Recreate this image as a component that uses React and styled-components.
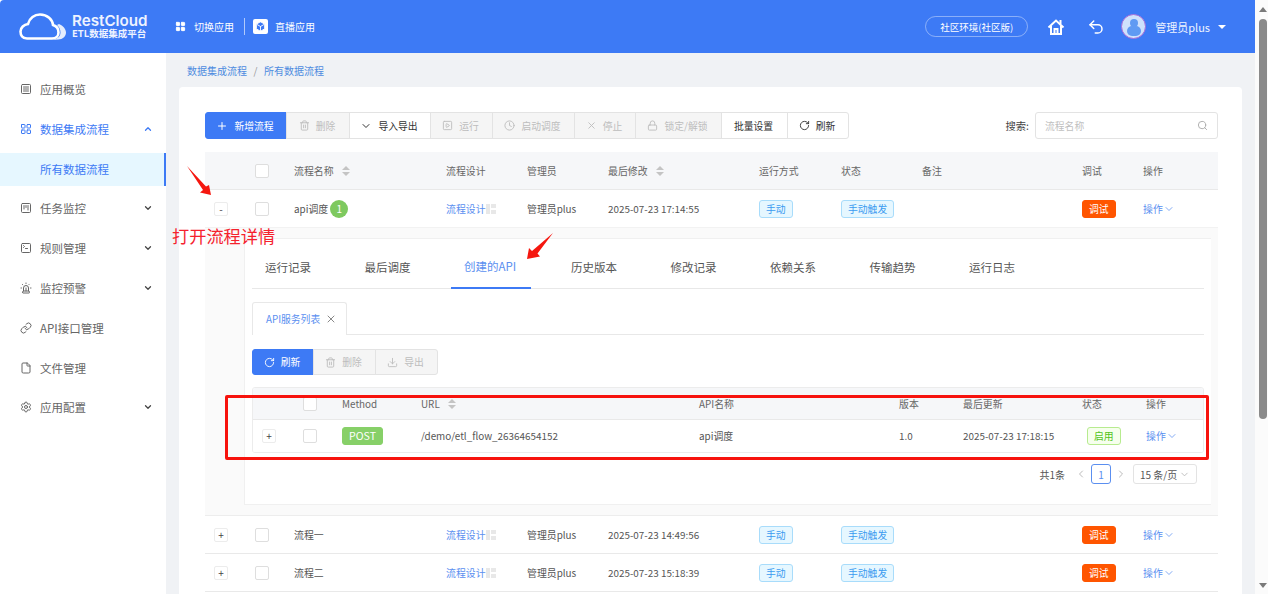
import React from "react";
import styled, { createGlobalStyle } from "styled-components";
import {
  Box, ChevronDown, ChevronLeft, ChevronRight, ChevronUp, Clock, Download, File,
  LayoutGrid, Link, Lock, Plus, RotateCw, Search, Settings, Siren, SquareKanban, SquareMenu, SquarePlay,
  SquareTerminal, Trash2, Undo2, X,
} from "lucide-react";

const blue = "#3d7af5";
const font = `"Noto Sans CJK SC", "Noto Sans", sans-serif`;

const GlobalStyle = createGlobalStyle`
  html, body { margin: 0; padding: 0; height: 100%; overflow: hidden; }
  body { font-family: ${font}; font-size: 10px; color: #595959; background: #fff; }
  * { box-sizing: border-box; }
`;

const Page = styled.div`
  position: relative;
  display: flex;
  width: 1268px;
  height: 594px;
  overflow: hidden;
`;

const Shell = styled.div`
  width: 1255px;
  flex: none;
  display: flex;
  flex-direction: column;
`;

const Scrollbar = styled.div`
  width: 13px;
  flex: none;
  display: flex;
  flex-direction: column;
  align-items: center;
  padding: 7px 0 6px 3px;
  background: #fbfbfb;
`;

const ScrollArrow = styled.div`
  width: 0;
  height: 0;
  border-left: 4px solid transparent;
  border-right: 4px solid transparent;
  ${(p) => (p.$down ? "border-top: 5px solid #7a7a7a;" : "border-bottom: 5px solid #7a7a7a;")}
`;

const ScrollThumb = styled.div`
  width: 8px;
  height: 400px;
  margin-top: 7px;
  margin-bottom: auto;
  border-radius: 4px;
  background: #8a8a8a;
`;

const Header = styled.header`
  height: 53px;
  flex: none;
  display: flex;
  align-items: center;
  padding: 0 29px 0 19px;
  background: ${blue};
  color: #fff;
  border-top-left-radius: 4px;
`;

const Logo = styled.div`
  display: flex;
  align-items: center;
  gap: 6px;
  width: 156px;
`;

const LogoText = styled.div`
  display: flex;
  flex-direction: column;
  margin-top: -1px;
  color: #eef3ff;
`;

const LogoName = styled.span`
  font-family: "Inter", sans-serif;
  font-size: 15.2px;
  line-height: 15px;
  font-weight: 600;
`;

const LogoSub = styled.span`
  font-size: 9.5px;
  line-height: 11px;
  font-weight: 700;
`;

const HeaderLink = styled.div`
  display: flex;
  align-items: center;
  gap: ${(p) => p.$gap}px;
  font-size: 10px;
`;

const HeaderDivider = styled.div`
  width: 1px;
  height: 17px;
  margin: 0 8px 0 10px;
  background: rgba(255, 255, 255, 0.6);
`;

const LiveIcon = styled.div`
  width: 15px;
  height: 15px;
  display: flex;
  align-items: center;
  justify-content: center;
  border-radius: 2px;
  background: #fff;
  color: ${blue};
`;

const HeaderRight = styled.div`
  margin-left: auto;
  display: flex;
  align-items: center;
`;

const EnvPill = styled.div`
  width: 103px;
  height: 21px;
  margin-right: 19px;
  display: flex;
  align-items: center;
  justify-content: center;
  border: 1px solid rgba(255, 255, 255, 0.4);
  border-radius: 11px;
  font-size: 9.5px;
`;

const HeaderIcon = styled.div`
  display: flex;
  margin-right: ${(p) => p.$right}px;
`;

const Avatar = styled.div`
  position: relative;
  width: 25px;
  height: 25px;
  margin: 0 9px 0 -8px;
  overflow: hidden;
  border-radius: 50%;
  border: 1px solid #a66bd8;
  background: #cfe1fc;

  &::before {
    content: "";
    position: absolute;
    left: 8px;
    top: 4px;
    width: 8px;
    height: 8px;
    border-radius: 50%;
    background: #5f9af3;
  }

  &::after {
    content: "";
    position: absolute;
    left: 5px;
    top: 11px;
    width: 14px;
    height: 10px;
    border-radius: 7px;
    background: #5f9af3;
  }
`;

const UserName = styled.span`
  font-size: 11px;
  color: #eef3ff;
`;

const Caret = styled.span`
  width: 0;
  height: 0;
  margin-left: 8px;
  border-left: 4px solid transparent;
  border-right: 4px solid transparent;
  border-top: 4px solid #fff;
`;

const Body = styled.div`
  flex: 1;
  display: flex;
  min-height: 0;
  background: #f0f2f5;
`;

const Sidebar = styled.nav`
  width: 166px;
  flex: none;
  padding-top: 16px;
  background: #fff;
`;

const NavItem = styled.div`
  height: 39.8px;
  display: flex;
  align-items: center;
  gap: 8px;
  padding: 0 13px 0 20px;
  font-size: 11.5px;
  color: ${(p) => (p.$active ? blue : "#666")};
`;

const NavChevron = styled.span`
  display: flex;
  margin-left: auto;
  color: ${(p) => (p.$active ? blue : "#444")};
`;

const NavSub = styled.div`
  height: 33px;
  margin: 4px 0 3px;
  display: flex;
  align-items: center;
  padding-left: 40px;
  font-size: 11.5px;
  color: ${blue};
  background: #e6f7ff;
  border-right: 2px solid ${blue};
`;

const Main = styled.main`
  flex: 1;
  min-width: 0;
  padding: 0 13px 0 13px;
`;

const Breadcrumb = styled.div`
  height: 34px;
  display: flex;
  align-items: center;
  gap: 6.5px;
  padding-left: 8px;
  color: #4e8be0;
  font-size: 10px;
`;

const Slash = styled.span`
  color: #999;
`;

const Card = styled.section`
  height: 600px;
  padding: 25px 24px 0 26px;
  background: #fff;
  border-radius: 4px 4px 0 0;
`;

const ToolRow = styled.div`
  height: 27px;
  display: flex;
  justify-content: space-between;
  margin-bottom: 13px;
`;

const BtnGroup = styled.div`
  display: flex;
  height: ${(p) => p.$h || 27}px;
`;

const Btn = styled.div`
  width: ${(p) => p.$w}px;
  display: flex;
  align-items: center;
  justify-content: center;
  gap: 6px;
  padding-right: 2px;
  margin-left: -1px;
  font-size: 9.8px;
  border: 1px solid ${(p) => (p.$primary ? blue : "#e3e3e3")};
  background: ${(p) => (p.$primary ? blue : p.$off ? "#f5f5f5" : "#fff")};
  color: ${(p) => (p.$primary ? "#fff" : p.$off ? "#bdbdbd" : "#333")};

  &:first-child {
    margin-left: 0;
    border-radius: 3px 0 0 3px;
  }

  &:last-child {
    border-radius: 0 3px 3px 0;
  }
`;

const SearchWrap = styled.div`
  display: flex;
  align-items: center;
  gap: 6px;
  color: #444;
  font-size: 10.3px;
`;

const SearchBox = styled.div`
  width: 183px;
  height: 27px;
  display: flex;
  align-items: center;
  justify-content: space-between;
  padding: 0 9px;
  font-size: 9.8px;
  border: 1px solid #e3e3e3;
  border-radius: 3px;
  color: #bfbfbf;
`;

const Row = styled.div`
  display: grid;
  grid-template-columns: ${(p) => p.$cols};
  height: ${(p) => p.$h}px;
  align-items: center;
  font-size: 9.9px;
  color: ${(p) => (p.$head ? "#666" : "#555")};
  background: ${(p) => (p.$head ? "#f6f7f9" : "#fff")};
  border-bottom: 1px solid ${(p) => p.$line || "#e9e9e9"};
`;

const Cell = styled.div`
  display: flex;
  align-items: center;
  gap: ${(p) => (p.$tight ? 0 : 5)}px;
  white-space: nowrap;
`;

const Sorter = styled.span`
  display: inline-flex;
  flex-direction: column;
  gap: 2px;
  margin-left: 3px;

  &::before, &::after {
    content: "";
    width: 0;
    height: 0;
    border-left: 4px solid transparent;
    border-right: 4px solid transparent;
  }

  &::before { border-bottom: 4px solid #c4c4c4; }
  &::after { border-top: 4px solid #c4c4c4; }
`;

const Check = styled.div`
  width: 14px;
  height: 14px;
  border: 1px solid #dedede;
  border-radius: 2px;
  background: #fff;
`;

const Expander = styled.div`
  width: 14px;
  height: 14px;
  margin-left: 9px;
  display: flex;
  align-items: center;
  justify-content: center;
  border: 1px solid #ececec;
  border-radius: 2px;
  background: #fff;
  color: #444;
  font-size: 10px;
`;

const Count = styled.span`
  width: 18px;
  height: 18px;
  margin-left: -3px;
  display: flex;
  align-items: center;
  justify-content: center;
  border-radius: 50%;
  background: #7ec95f;
  color: #fff;
  font-size: 10px;
`;

const LinkText = styled.span`
  color: #5b8ff0;
`;

const Tag = styled.span`
  height: 18px;
  margin-left: ${(p) => p.$left || 0}px;
  padding: 0 ${(p) => p.$pad || 6}px;
  display: inline-flex;
  align-items: center;
  border-radius: 3px;
  font-size: ${(p) => p.$size || 9.8}px;
  border: 1px solid ${(p) => p.$line};
  background: ${(p) => p.$bg};
  color: ${(p) => p.$fg};
`;

const Detail = styled.div`
  height: 288px;
  padding: 10px 7px 10px 39px;
  background: #fafafa;
  border-bottom: 1px solid #ededed;
`;

const DetailPanel = styled.div`
  height: 267px;
  padding: 0 7px 0 7px;
  background: #fff;
  border: 1px solid #f0f0f0;
  border-width: 1px 0 1px 1px;
`;

const TabBar = styled.div`
  height: 50px;
  display: flex;
  gap: 27px;
  border-bottom: 1px solid #e8e8e8;
`;

const TabItem = styled.div`
  width: ${(p) => (p.$active ? 80 : 72.5)}px;
  flex: none;
  display: flex;
  align-items: center;
  padding: 5px 0 0 13px;
  font-size: 11.5px;
  color: ${(p) => (p.$active ? "#5b8ff0" : "#555")};
  border-bottom: ${(p) => (p.$active ? `2px solid ${blue}` : "none")};
  margin-bottom: -1px;
`;

const SubTabs = styled.div`
  height: 33px;
  margin: 13px 0 14px;
  display: flex;
  border-bottom: 1px solid #e8e8e8;
`;

const SubTab = styled.div`
  width: 95px;
  height: 33px;
  display: flex;
  align-items: center;
  gap: 5px;
  padding-left: 13px;
  color: #5b8ff0;
  font-size: 9.8px;
  background: #fff;
  border: 1px solid #e8e8e8;
  border-bottom: none;
  border-radius: 3px 3px 0 0;

  svg { color: #888; }
`;

const InnerTable = styled.div`
  margin-top: 12px;
  border: 1px solid #ececec;
  border-radius: 3px;
  overflow: hidden;
`;

const Pager = styled.div`
  display: flex;
  align-items: center;
  justify-content: flex-end;
  gap: 4px;
  margin-top: 11px;
  padding-right: 7px;
  font-size: 10px;
  color: #555;
`;

const PagerTotal = styled.span`
  margin-right: 6px;
`;

const PageNum = styled.div`
  width: 20px;
  height: 20px;
  display: flex;
  align-items: center;
  justify-content: center;
  border: 1px solid #5b8ff0;
  border-radius: 3px;
  color: #5b8ff0;
`;

const PageSize = styled.div`
  width: 64px;
  height: 20px;
  margin-left: 2px;
  display: flex;
  align-items: center;
  justify-content: space-between;
  padding: 0 6px;
  border: 1px solid #e3e3e3;
  border-radius: 3px;
`;

const Annotation = styled.div`
  position: absolute;
  left: 172px;
  top: 224px;
  font-size: 17.2px;
  line-height: 24px;
  color: #f5222d;
  white-space: nowrap;
`;

const RedFrame = styled.div`
  position: absolute;
  left: 225px;
  top: 395px;
  width: 984px;
  height: 65px;
  border: 3px solid #f7130d;
  border-radius: 2px;
  pointer-events: none;
`;

const ArrowLayer = styled.svg`
  position: absolute;
  left: 0;
  top: 0;
  pointer-events: none;
`;

const mainCols = "50px 39px 152px 81px 81px 151px 82px 81px 160px 61px 1fr";
const innerCols = "50px 39px 79px 278px 200px 64px 119px 64px 1fr";

const navAfter = [
  { icon: SquareKanban, label: "任务监控", more: true },
  { icon: SquareTerminal, label: "规则管理", more: true },
  { icon: Siren, label: "监控预警", more: true },
  { icon: Link, label: "API接口管理" },
  { icon: File, label: "文件管理" },
  { icon: Settings, label: "应用配置", more: true },
];

const tabs = ["运行记录", "最后调度", "创建的API", "历史版本", "修改记录", "依赖关系", "传输趋势", "运行日志"];

const flows = [
  { name: "流程一", time: "2025-07-23 14:49:56" },
  { name: "流程二", time: "2025-07-23 15:18:39" },
];

const CloudLogo = () => (
  <svg width="47" height="32" viewBox="0 0 47 32" fill="none">
    <path
      d="M8 27.500C3.500 27.500 1.500 24 1.500 20.500C1.500 16.500 5 13.500 9 13C10.500 7 15.500 3.500 21 3.500C28.500 3.500 33.500 8.500 34 14C37.500 15 39.500 18 39.500 21.500C39.500 25 37 27.500 33 27.500Z"
      stroke="#fff"
      strokeWidth="2.600"
    />
    <path d="M40 13C44 14.500 47 18 47 21.500C47 25.500 43.500 28.500 39.500 28.500L33 29C38 28 41.500 26 41.500 21.500C41.500 18 40 16 38 14Z" fill="#e5edfd" />
  </svg>
);

const HomeIcon = () => (
  <svg width="18" height="18" viewBox="0 0 18 18" fill="none" stroke="#fff" strokeWidth="2">
    <path d="M1.500 9.500L9 2.500L16.500 9.500" />
    <path d="M4 8V16H14V8" />
    <path d="M7.500 16V11H10.500V16" />
    <path d="M13.500 2V6" />
  </svg>
);

const FlowIcon = () => (
  <svg width="10" height="10" viewBox="0 0 10 10" fill="#e8e8e8">
    <rect x="0" y="0" width="4" height="10" />
    <rect x="5" y="0" width="5" height="4" />
    <rect x="5" y="6" width="5" height="4" />
  </svg>
);

const OpsLink = () => (
  <Cell $tight><LinkText>操作</LinkText><ChevronDown size={12} strokeWidth={1.5} color="#5b8ff0" /></Cell>
);

const FlowRow = ({ expander, name, badge, time, line }) => (
  <Row $cols={mainCols} $h={38} $line={line}>
    <Expander>{expander}</Expander>
    <Check />
    <Cell>{name}{badge && <Count>{badge}</Count>}</Cell>
    <Cell $tight><LinkText>流程设计</LinkText><FlowIcon /></Cell>
    <Cell>管理员plus</Cell>
    <Cell>{time}</Cell>
    <Cell><Tag $line="#a8dcfb" $bg="#e6f7ff" $fg="#3b9bf0">手动</Tag></Cell>
    <Cell><Tag $line="#a8dcfb" $bg="#e6f7ff" $fg="#3b9bf0">手动触发</Tag></Cell>
    <Cell />
    <Cell><Tag $line="#ff5500" $bg="#ff5500" $fg="#fff">调试</Tag></Cell>
    <OpsLink />
  </Row>
);

export default function App() {
  return (
    <Page>
      <GlobalStyle />
      <Shell>
        <Header>
          <Logo>
            <CloudLogo />
            <LogoText>
              <LogoName>RestCloud</LogoName>
              <LogoSub>ETL数据集成平台</LogoSub>
            </LogoText>
          </Logo>
          <HeaderLink $gap={8}><LayoutGrid size={11} fill="#fff" />切换应用</HeaderLink>
          <HeaderDivider />
          <HeaderLink $gap={7}><LiveIcon><Box size={11} fill={blue} stroke="#fff" /></LiveIcon>直播应用</HeaderLink>
          <HeaderRight>
            <EnvPill>社区环境(社区版)</EnvPill>
            <HeaderIcon $right={22}><HomeIcon /></HeaderIcon>
            <HeaderIcon $right={24}><Undo2 size={18} strokeWidth={2} /></HeaderIcon>
            <Avatar />
            <UserName>管理员plus</UserName>
            <Caret />
          </HeaderRight>
        </Header>
        <Body>
          <Sidebar>
            <NavItem><SquareMenu size={12} />应用概览</NavItem>
            <NavItem $active>
              <LayoutGrid size={12} />数据集成流程
              <NavChevron $active><ChevronUp size={10} strokeWidth={3} /></NavChevron>
            </NavItem>
            <NavSub>所有数据流程</NavSub>
            {navAfter.map(({ icon: Icon, label, more }) => (
              <NavItem key={label}>
                <Icon size={12} />{label}
                {more && <NavChevron><ChevronDown size={10} strokeWidth={3} /></NavChevron>}
              </NavItem>
            ))}
          </Sidebar>
          <Main>
            <Breadcrumb>数据集成流程<Slash>/</Slash>所有数据流程</Breadcrumb>
            <Card>
              <ToolRow>
                <BtnGroup>
                  <Btn $primary $w={82}><Plus size={12} />新增流程</Btn>
                  <Btn $off $w={64}><Trash2 size={11} />删除</Btn>
                  <Btn $w={82}><ChevronDown size={12} />导入导出</Btn>
                  <Btn $off $w={63}><SquarePlay size={11} />运行</Btn>
                  <Btn $off $w={83}><Clock size={11} />启动调度</Btn>
                  <Btn $off $w={62}><X size={11} />停止</Btn>
                  <Btn $off $w={87}><Lock size={11} />锁定/解锁</Btn>
                  <Btn $w={67}>批量设置</Btn>
                  <Btn $w={62}><RotateCw size={11} />刷新</Btn>
                </BtnGroup>
                <SearchWrap>
                  搜索:
                  <SearchBox>流程名称<Search size={11} color="#aaa" /></SearchBox>
                </SearchWrap>
              </ToolRow>

              <Row $head $cols={mainCols} $h={38}>
                <Cell />
                <Check />
                <Cell>流程名称<Sorter /></Cell>
                <Cell>流程设计</Cell>
                <Cell>管理员</Cell>
                <Cell>最后修改<Sorter /></Cell>
                <Cell>运行方式</Cell>
                <Cell>状态</Cell>
                <Cell>备注</Cell>
                <Cell>调试</Cell>
                <Cell>操作</Cell>
              </Row>
              <FlowRow expander="-" name="api调度" badge="1" time="2025-07-23 17:14:55" line="#f2f2f2" />

              <Detail>
                <DetailPanel>
                  <TabBar>
                    {tabs.map((t, i) => (
                      <TabItem key={t} $active={i === 2}>{t}</TabItem>
                    ))}
                  </TabBar>
                  <SubTabs>
                    <SubTab>API服务列表<X size={12} /></SubTab>
                  </SubTabs>
                  <BtnGroup $h={26}>
                    <Btn $primary $w={62}><RotateCw size={11} />刷新</Btn>
                    <Btn $off $w={63}><Trash2 size={11} />删除</Btn>
                    <Btn $off $w={63}><Download size={11} />导出</Btn>
                  </BtnGroup>
                  <InnerTable>
                    <Row $head $cols={innerCols} $h={32}>
                      <Cell />
                      <Check />
                      <Cell>Method</Cell>
                      <Cell>URL<Sorter /></Cell>
                      <Cell>API名称</Cell>
                      <Cell>版本</Cell>
                      <Cell>最后更新</Cell>
                      <Cell>状态</Cell>
                      <Cell>操作</Cell>
                    </Row>
                    <Row $cols={innerCols} $h={32} $line="#fff">
                      <Expander>+</Expander>
                      <Check />
                      <Cell><Tag $line="#87d068" $bg="#87d068" $fg="#fff" $pad={6} $size={10.6}>POST</Tag></Cell>
                      <Cell>/demo/etl_flow_26364654152</Cell>
                      <Cell>api调度</Cell>
                      <Cell>1.0</Cell>
                      <Cell>2025-07-23 17:18:15</Cell>
                      <Cell><Tag $left={5} $line="#b7eb8f" $bg="#f6ffed" $fg="#52c41a">启用</Tag></Cell>
                      <OpsLink />
                    </Row>
                  </InnerTable>
                  <Pager>
                    <PagerTotal>共1条</PagerTotal>
                    <ChevronLeft size={12} color="#bbb" />
                    <PageNum>1</PageNum>
                    <ChevronRight size={12} color="#bbb" />
                    <PageSize>15 条/页<ChevronDown size={11} color="#bbb" /></PageSize>
                  </Pager>
                </DetailPanel>
              </Detail>

              {flows.map((f) => (
                <FlowRow key={f.name} expander="+" name={f.name} time={f.time} />
              ))}
            </Card>
          </Main>
        </Body>
      </Shell>
      <Scrollbar>
        <ScrollArrow />
        <ScrollThumb />
        <ScrollArrow $down />
      </Scrollbar>

      <ArrowLayer width="1268" height="594">
        <polygon points="187,166 206,186.500 209,185 211,195 200,192.500 203,190" fill="#f5170f" />
        <polygon points="553,233 537.500,253.500 540,256.500 527,259 529,248 532,251" fill="#f5170f" />
      </ArrowLayer>
      <Annotation>打开流程详情</Annotation>
      <RedFrame />
    </Page>
  );
}
